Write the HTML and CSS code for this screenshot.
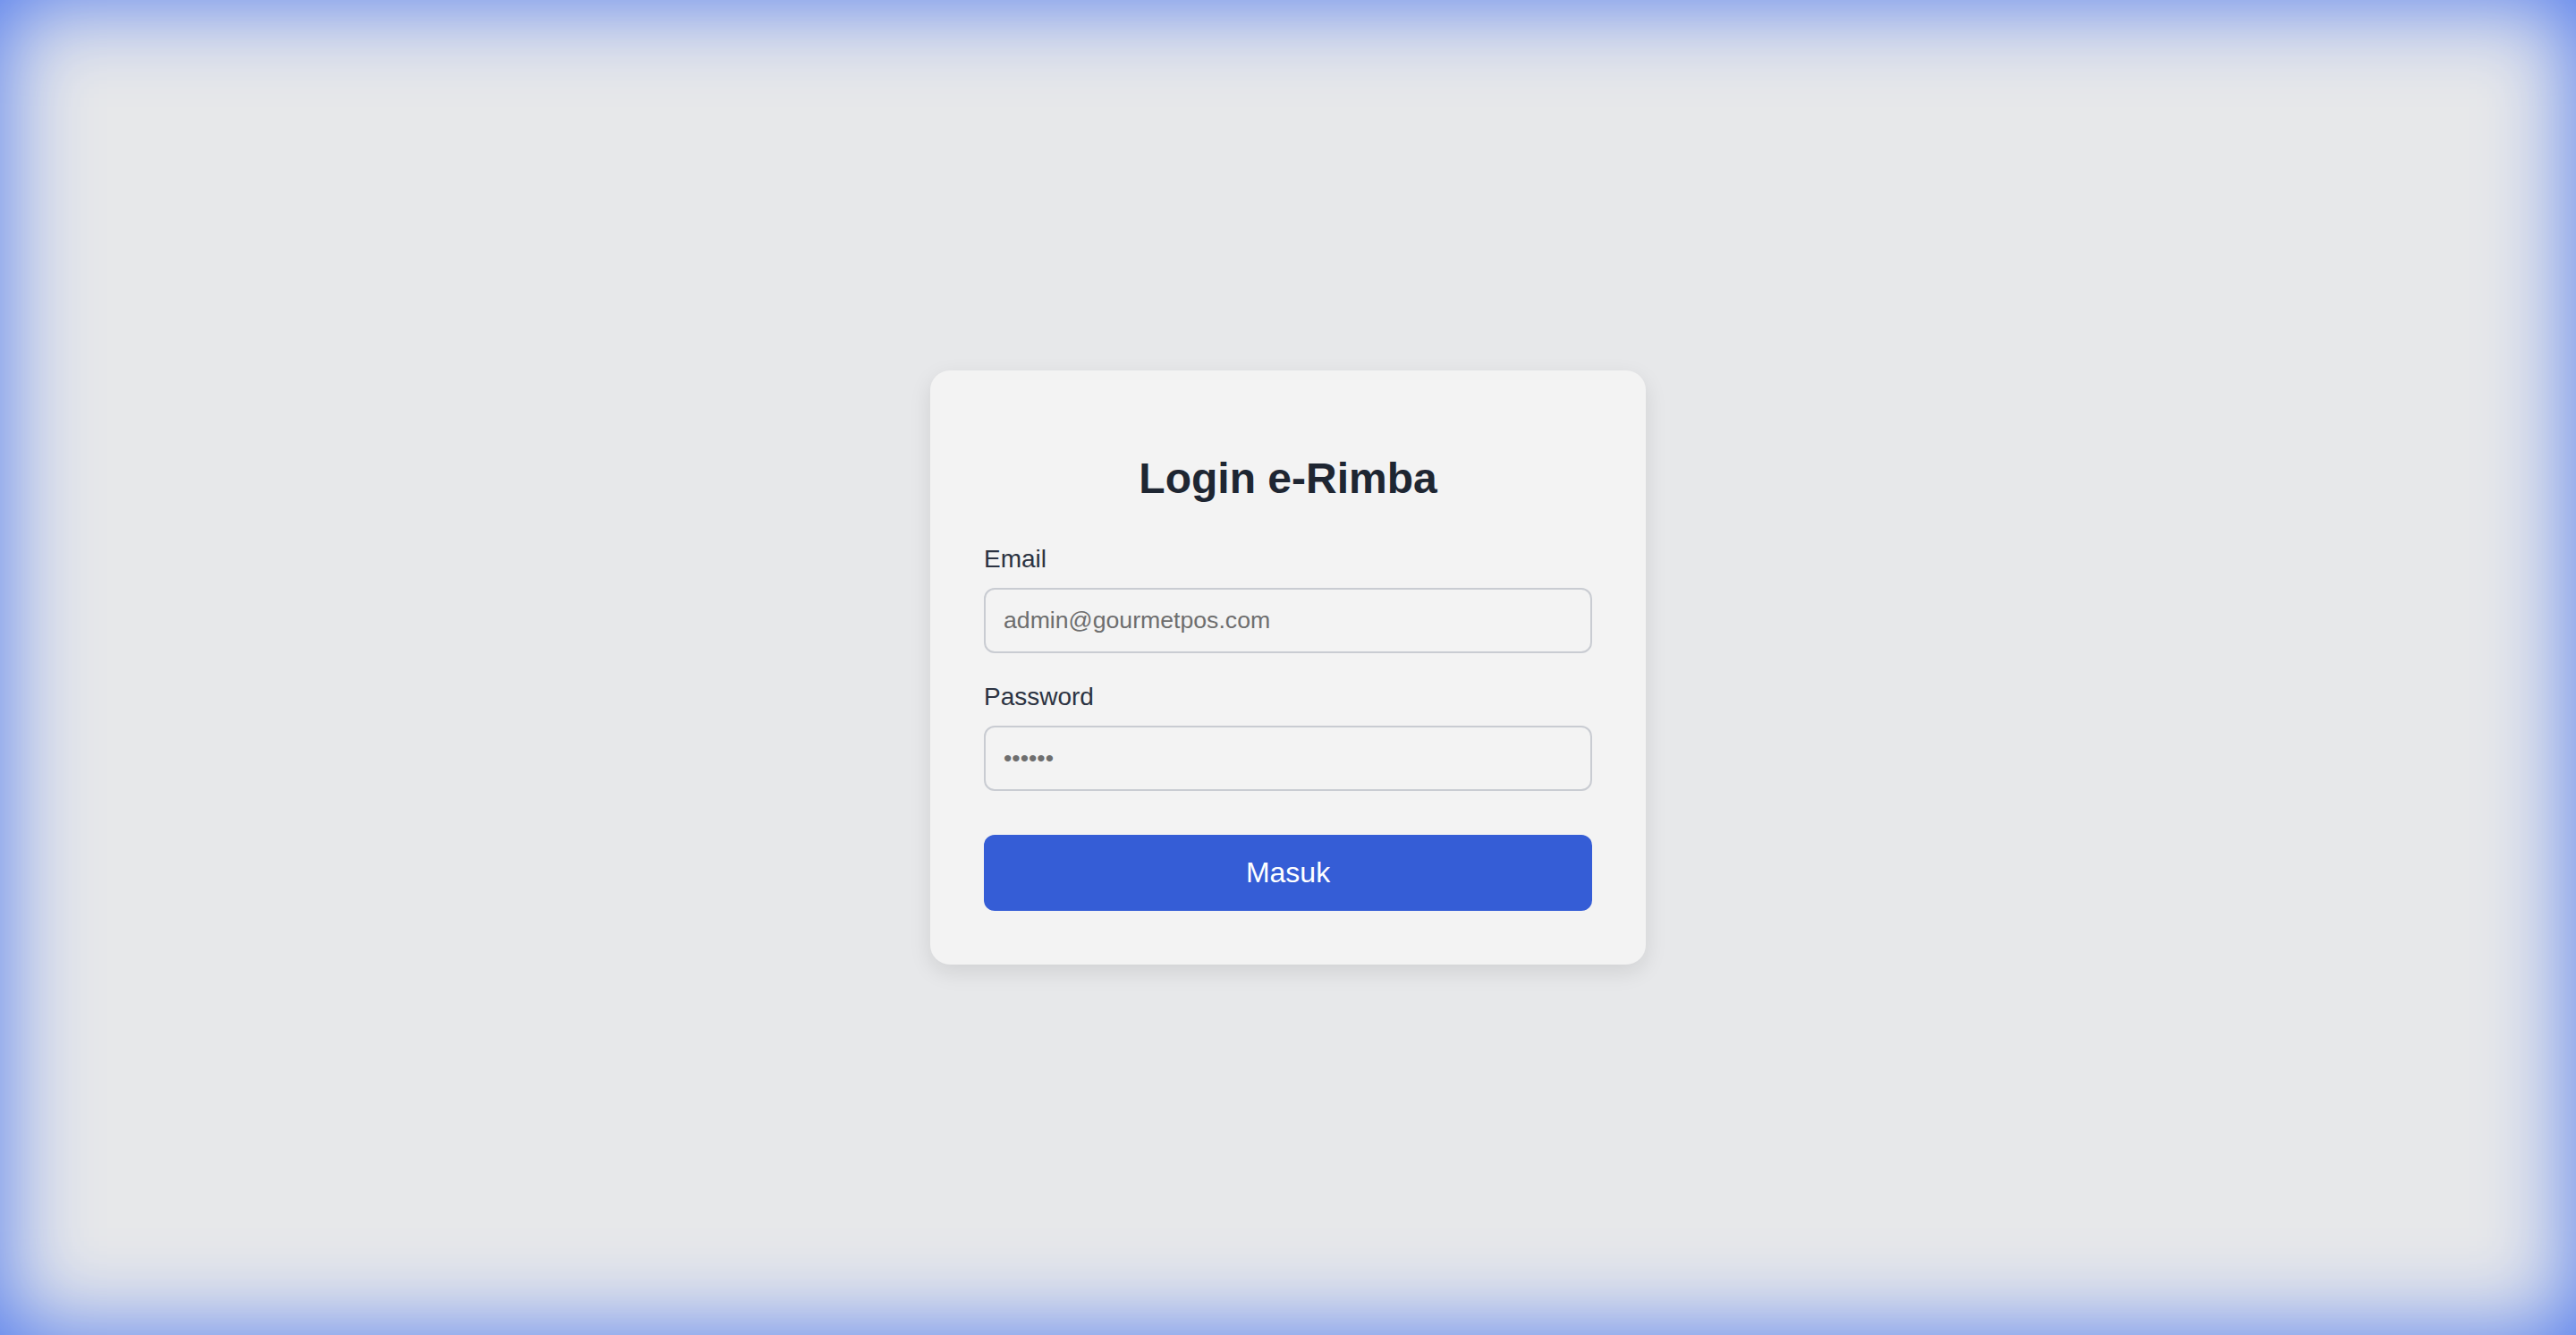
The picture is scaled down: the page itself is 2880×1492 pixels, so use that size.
FILE: index.html
```html
<!DOCTYPE html>
<html lang="id">
<head>
<meta charset="utf-8">
<title>Login e-Rimba</title>
<link rel="stylesheet" href="styles.css">
</head>
<body>
<main class="page">
  <form class="card">
    <h2 class="title">Login e-Rimba</h2>
    <div class="field">
      <label class="label" for="email">Email</label>
      <input class="input" id="email" type="email" placeholder="admin@gourmetpos.com">
    </div>
    <div class="field">
      <label class="label" for="password">Password</label>
      <input class="input" id="password" type="text" placeholder="••••••">
    </div>
    <button class="button" type="button">Masuk</button>
  </form>
</main>
</body>
</html>
```

FILE: styles.css
```css
html, body {
  margin: 0;
  padding: 0;
  height: 100%;
}

body {
  font-family: "Liberation Sans", Arial, Helvetica, sans-serif;
  background: #e7e8ea;
}

.page {
  min-height: 100vh;
  box-sizing: border-box;
  display: flex;
  align-items: center;
  justify-content: center;
  box-shadow: inset 0 0 100px rgb(75, 118, 238);
}

.card {
  width: 800px;
  box-sizing: border-box;
  padding: 60px;
  background: #f3f3f3;
  border-radius: 22px;
  box-shadow: 0 8px 24px rgba(0, 0, 0, 0.10);
  display: flex;
  flex-direction: column;
}

.title {
  margin: 33px 0 47px;
  font-size: 48px;
  line-height: normal;
  font-weight: 700;
  text-align: center;
  color: #1e2632;
}

.field {
  display: flex;
  flex-direction: column;
  margin-bottom: 33px;
}

.field + .field {
  margin-bottom: 49px;
}

.label {
  font-size: 28px;
  line-height: normal;
  color: #2c3342;
  margin-bottom: 16px;
}

.input {
  height: 73px;
  box-sizing: border-box;
  padding: 0 20px;
  border: 2px solid #c9ccd2;
  border-radius: 12px;
  background: #f3f3f3;
  font-family: "Liberation Sans", Arial, Helvetica, sans-serif;
  font-size: 26.67px;
  color: #333;
  outline: none;
}

.input::placeholder {
  color: #6e6e6e;
  opacity: 1;
}

.button {
  height: 85px;
  border: none;
  border-radius: 12px;
  background: #355dd6;
  color: #ffffff;
  font-family: "Liberation Sans", Arial, Helvetica, sans-serif;
  font-size: 32px;
  cursor: pointer;
}
```
